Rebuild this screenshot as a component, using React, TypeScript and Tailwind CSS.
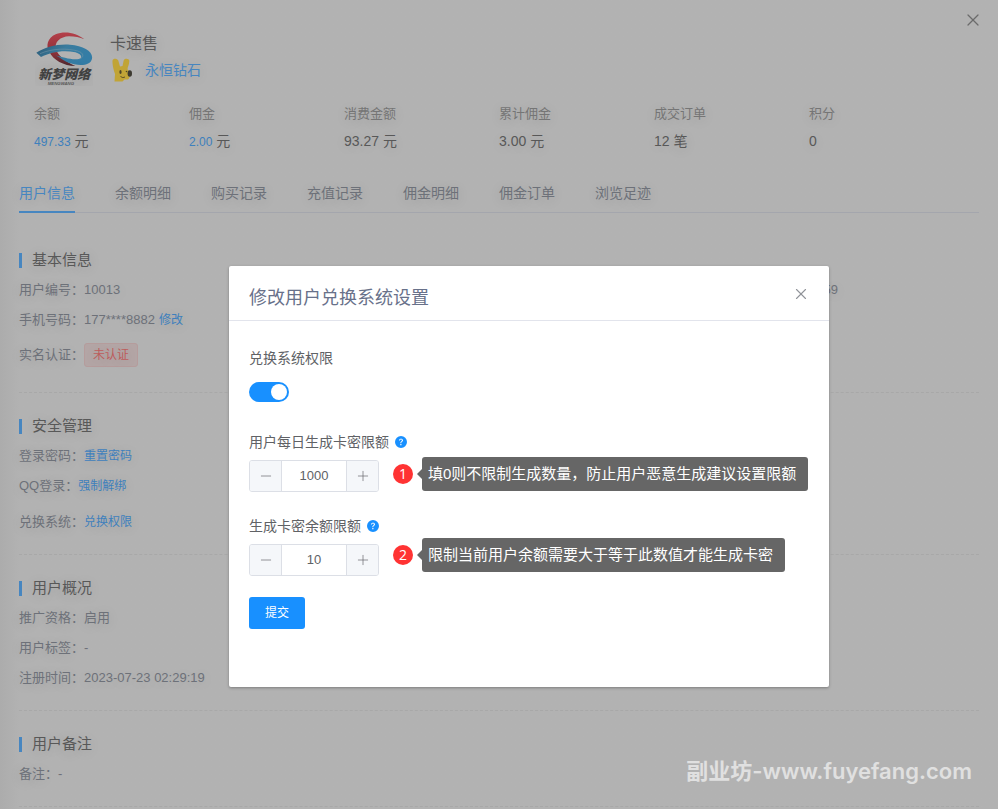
import { useState, type ReactNode } from "react";
import { Minus, Plus, X } from "lucide-react";
import { BsQuestionCircleFill } from "react-icons/bs";

const stats = [
  { label: "余额", value: "497.33", unit: "元", link: true },
  { label: "佣金", value: "2.00", unit: "元", link: true },
  { label: "消费金额", value: "93.27", unit: "元" },
  { label: "累计佣金", value: "3.00", unit: "元" },
  { label: "成交订单", value: "12", unit: "笔" },
  { label: "积分", value: "0", unit: "" },
];

const tabs = ["用户信息", "余额明细", "购买记录", "充值记录", "佣金明细", "佣金订单", "浏览足迹"];

function Logo() {
  return (
    <svg viewBox="30 30 174 168" className="h-14 w-[58px] shrink-0" role="img" aria-label="新梦网络">
      <defs>
        <linearGradient id="red" x1="0" y1="0" x2="0" y2="1">
          <stop offset="0" stopColor="#b5404a" />
          <stop offset="0.6" stopColor="#8f3038" />
          <stop offset="1" stopColor="#4e2a30" />
        </linearGradient>
        <linearGradient id="blue" x1="0" y1="0" x2="1" y2="0.4">
          <stop offset="0" stopColor="#2c5873" />
          <stop offset="0.5" stopColor="#3a7c9e" />
          <stop offset="1" stopColor="#347da6" />
        </linearGradient>
      </defs>
      <path d="M178 58C154 38 119 32 92 43C67 54 62 79 73 95C84 120 116 137 151 138C125 127 99 108 93 88C87 66 106 50 132 49C149 49 165 53 178 58Z" fill="url(#red)" />
      <path d="M34 98C58 82 98 71 135 74C176 77 205 94 201 116C197 135 173 137 148 133C123 129 110 116 92 106C112 112 142 121 162 117C174 113 169 102 151 97C114 89 76 97 48 111Z" fill="url(#blue)" />
      <path d="M45 101C84 84 129 85 158 93C178 99 177 112 164 117" fill="none" stroke="#7c98a6" strokeWidth="1.5" />
      <text x="40" y="176" fontSize="39" fontWeight="900" fontStyle="italic" fill="#414141" fontFamily="Noto Sans CJK SC, sans-serif">新梦网络</text>
      <text x="68" y="195" fontSize="13" fontWeight="700" fontStyle="italic" fill="#575757" fontFamily="Liberation Sans, sans-serif">MENGWANG</text>
    </svg>
  );
}

function Rabbit() {
  return (
    <svg viewBox="0 0 20 24" className="h-6 w-5" aria-hidden="true">
      <path d="M2.500 23.500L3 16C1 10 .3 5 .5 2.500C1 0 5 0 6.300 2.500L8 8.500L10.500 8L11.800 2C13 0 17.300 .3 17.300 3C17.300 6.500 15.500 9 15.500 11.500C18.500 13 19 19.500 16 21.500L12.500 21.500L10.500 23.500Z" fill="#c1a436" />
      <ellipse cx="17.800" cy="15.500" rx="2.200" ry="3.200" fill="#3d3a31" />
      <ellipse cx="8.500" cy="14" rx="1.100" ry="1.900" fill="#4e4629" />
      <circle cx="14.500" cy="13.500" r=".8" fill="#4e4629" />
      <path d="M8.500 18.500Q11 20.500 13 19" fill="none" stroke="#5d5128" />
    </svg>
  );
}

function Section({ title, children }: { title: string; children: ReactNode }) {
  return (
    <section className="border-b border-dashed border-[#a8a8a8] pt-[18px] pb-[17px]">
      <h2 className="flex h-[30px] items-center gap-[10px] text-[15px] text-[#585858] before:h-[15px] before:w-[3px] before:bg-[#4786c0]">
        {title}
      </h2>
      {children}
    </section>
  );
}

function Row({ label, tall, children }: { label: string; tall?: boolean; children: ReactNode }) {
  return (
    <div className={tall ? "flex h-9 items-center pt-[6px]" : "flex h-[30px] items-center"}>
      <span>{label}：</span>
      {children}
    </div>
  );
}

function TextLink({ children }: { children: string }) {
  return <a href="#" className="text-xs text-[#3e80bd]">{children}</a>;
}

function Help({ label }: { label: string }) {
  return (
    <button type="button" aria-label={label} className="text-[#1890ff]">
      <BsQuestionCircleFill size={12} />
    </button>
  );
}

function NumberField({ id, initial }: { id: string; initial: number }) {
  const [value, setValue] = useState(initial);
  return (
    <div className="flex h-8 w-[130px] overflow-hidden rounded-[3px] border border-[#dcdfe6] text-[#606266]">
      <button type="button" aria-label="减少" onClick={() => setValue(value - 1)} className="flex w-8 shrink-0 items-center justify-center border-r border-[#dcdfe6] bg-[#f5f7fa]">
        <Minus size={16} strokeWidth={1} />
      </button>
      <input
        id={id}
        inputMode="numeric"
        value={value}
        onChange={(e) => setValue(Number(e.target.value) || 0)}
        className="w-full min-w-0 bg-white text-center text-[13px] outline-none"
      />
      <button type="button" aria-label="增加" onClick={() => setValue(value + 1)} className="flex w-8 shrink-0 items-center justify-center border-l border-[#dcdfe6] bg-[#f5f7fa]">
        <Plus size={16} strokeWidth={1} />
      </button>
    </div>
  );
}

function Note({ index, children }: { index: number; children: string }) {
  return (
    <div className="flex h-[34px] items-center whitespace-nowrap text-white">
      <span className="flex size-5 items-center justify-center rounded-full bg-[#ff3333] font-['Open_Sans',sans-serif] text-sm">{index}</span>
      <span className="ml-1 border-y-[5px] border-r-[5px] border-y-transparent border-r-[#666]" />
      <span className="flex h-full items-center rounded-[3px] bg-[#666] pr-3 pl-[6px] text-[15px]">{children}</span>
    </div>
  );
}

function Dialog() {
  const [enabled, setEnabled] = useState(true);
  return (
    <div className="absolute inset-0 flex items-start justify-center pt-[266px] pl-[60px]">
      <div role="dialog" aria-labelledby="dialog-title" className="relative w-[600px] max-w-full rounded-[2px] bg-white shadow-[0_1px_3px_rgba(0,0,0,0.3)]">
        <header className="flex justify-between border-b border-[#e2e4ec] px-5 pt-5 pb-[10px]">
          <h1 id="dialog-title" className="text-lg leading-6 text-[#68718a]">修改用户兑换系统设置</h1>
          <button type="button" aria-label="关闭" className="flex size-4 items-center justify-center text-[#909399]">
            <X size={18} strokeWidth={1.5} className="shrink-0" />
          </button>
        </header>
        <form className="px-5 pt-[21px] pb-[58px] text-sm text-[#606266]" onSubmit={(e) => e.preventDefault()}>
          <div className="flex flex-col gap-[18px]">
            <div className="flex flex-col gap-[2px]">
              <label htmlFor="permission" className="leading-8">兑换系统权限</label>
              <div className="flex h-8 items-center">
                <input
                  id="permission"
                  type="checkbox"
                  role="switch"
                  checked={enabled}
                  onChange={(e) => setEnabled(e.target.checked)}
                  className="flex h-5 w-10 appearance-none items-center rounded-full bg-[#c0c4cc] px-[2px] before:size-4 before:rounded-full before:bg-white checked:justify-end checked:bg-[#1890ff]"
                />
              </div>
            </div>
            <div className="flex flex-col gap-[2px]">
              <div className="flex items-center gap-[6px]">
                <label htmlFor="daily" className="leading-8">用户每日生成卡密限额</label>
                <Help label="每日限额说明" />
              </div>
              <NumberField id="daily" initial={1000} />
            </div>
            <div className="flex flex-col gap-[2px]">
              <div className="flex items-center gap-[6px]">
                <label htmlFor="balance" className="leading-8">生成卡密余额限额</label>
                <Help label="余额限额说明" />
              </div>
              <NumberField id="balance" initial={10} />
            </div>
          </div>
          <button type="submit" className="mt-[21px] block h-8 w-14 rounded-[3px] bg-[#1890ff] text-xs text-white">提交</button>
        </form>
        <div className="absolute top-[191px] left-[164px] flex flex-col gap-[47px]">
          <Note index={1}>填0则不限制生成数量，防止用户恶意生成建议设置限额</Note>
          <Note index={2}>限制当前用户余额需要大于等于此数值才能生成卡密</Note>
        </div>
      </div>
    </div>
  );
}

export default function App() {
  return (
    <div className="relative min-h-screen overflow-hidden bg-[#b2b2b2] bg-linear-to-r from-[#acacac] to-[#b2b2b2] to-[20px] font-['Liberation_Sans','Noto_Sans_CJK_SC',sans-serif] text-[13px] text-[#6d7179]">
      <main className="text-shadow-[0_2px_14px_rgba(0,0,0,0.12)]">
        <header className="flex justify-between pt-[30px] pl-[35px]">
          <div className="flex gap-[17px]">
            <Logo />
            <div className="flex flex-col">
              <h1 className="text-base leading-[27px] text-[#585858]">卡速售</h1>
              <div className="flex items-center gap-[13px] pl-[2px] text-sm leading-[26px] text-[#4786c0]">
                <Rabbit />
                永恒钻石
              </div>
            </div>
          </div>
          <button type="button" aria-label="关闭" className="mr-[15px] -mt-5 flex size-5 items-center justify-center text-[#6b6b6b]">
            <X size={20} strokeWidth={1.5} />
          </button>
        </header>
        <dl className="grid grid-cols-6 px-[34px] pt-[13px]">
          {stats.map((s) => (
            <div key={s.label}>
              <dt className="leading-[30px] text-[#757575]">{s.label}</dt>
              <dd className="text-sm leading-6 text-[#585858]">
                <span className={s.link ? "text-xs text-[#3e80bd]" : ""}>{s.value}</span> {s.unit}
              </dd>
            </div>
          ))}
        </dl>
        <div className="px-[19px] pt-5">
          <nav className="mb-[14px] flex h-10 gap-10 border-b border-[#a4a6ad] text-sm">
            {tabs.map((t, i) => (
              <a
                key={t}
                href="#"
                className={
                  i === 0
                    ? "flex h-10 items-center border-b-2 border-[#4786c0] pt-[2px] text-[#4786c0]"
                    : "flex h-10 items-center border-b-2 border-transparent pt-[2px]"
                }
              >
                {t}
              </a>
            ))}
          </nav>
          <Section title="基本信息">
            <Row label="用户编号">
              10013<span className="mr-[141px] ml-auto">59</span>
            </Row>
            <Row label="手机号码">
              <span className="mr-1">177****8882</span>
              <TextLink>修改</TextLink>
            </Row>
            <div className="flex h-10 items-center">
              <span>实名认证：</span>
              <span className="flex h-6 items-center rounded-[3px] border border-[#b59c9c] bg-[#b3a5a5] px-2 text-xs text-[#bd5c5c]">未认证</span>
            </div>
          </Section>
          <Section title="安全管理">
            <Row label="登录密码"><TextLink>重置密码</TextLink></Row>
            <Row label="QQ登录"><TextLink>强制解绑</TextLink></Row>
            <Row label="兑换系统" tall><TextLink>兑换权限</TextLink></Row>
          </Section>
          <Section title="用户概况">
            <Row label="推广资格">启用</Row>
            <Row label="用户标签">-</Row>
            <Row label="注册时间">2023-07-23 02:29:19</Row>
          </Section>
          <Section title="用户备注">
            <Row label="备注">-</Row>
          </Section>
        </div>
      </main>
      <Dialog />
      <p className="absolute right-[26px] bottom-[22px] font-['Inter','Noto_Sans_CJK_SC',sans-serif] text-[22px] leading-8 font-semibold text-[#e0e0e0]">
        副业坊-www.fuyefang.com
      </p>
    </div>
  );
}
